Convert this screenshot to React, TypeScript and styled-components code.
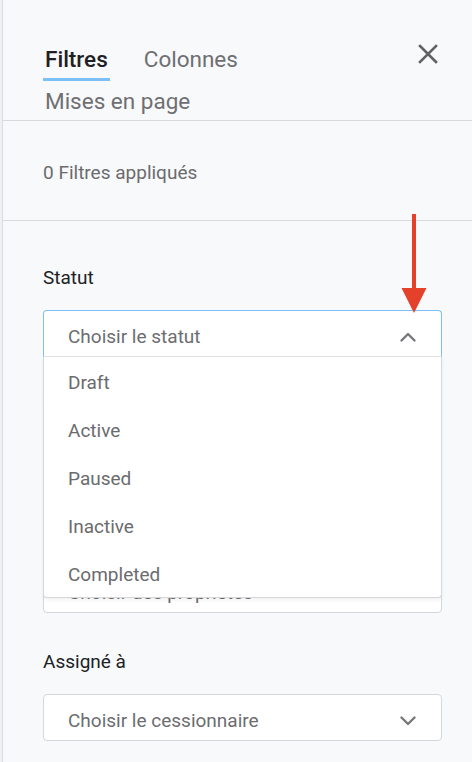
import React from "react";
import styled, { createGlobalStyle, css } from "styled-components";

const GlobalStyle = createGlobalStyle`
  html, body {
    margin: 0;
    padding: 0;
    background: #f8f9fb;
    font-family: Roboto, "Noto Sans", "Liberation Sans", sans-serif;
    -webkit-font-smoothing: antialiased;
  }
  * { box-sizing: border-box; }
`;

const Page = styled.div`
  display: flex;
  min-height: 762px;
  width: 472px;
`;

const Backdrop = styled.div`
  width: 2px;
  flex: none;
  background: #eef0f3;
`;

const Panel = styled.aside`
  position: relative;
  flex: 1;
  min-width: 0;
  background: #f8f9fb;
  border-left: 1px solid #dadcdf;
`;

const Header = styled.header`
  display: flex;
  align-items: flex-start;
  justify-content: space-between;
  padding: 47px 32px 7px 40px;
  border-bottom: 1px solid #d8d9db;
`;

const Tabs = styled.nav`
  flex: 0 0 340px;
  display: flex;
  flex-wrap: wrap;
  column-gap: 32px;
  row-gap: 8px;
  align-items: flex-start;
`;

const Tab = styled.button<{ $active?: boolean }>`
  border: none;
  background: none;
  margin: 0;
  padding: 0 2px;
  font-family: inherit;
  font-size: 22.5px;
  line-height: 24px;
  font-weight: 400;
  color: #6f6f72;
  cursor: pointer;
  white-space: nowrap;
  ${(p) =>
    p.$active &&
    css`
      font-weight: 500;
      color: #1f2023;
      padding-bottom: 7px;
      border-bottom: 3px solid #7cc0f7;
    `}
`;

const CloseButton = styled.button`
  flex: none;
  width: 24px;
  height: 24px;
  margin-top: -5px;
  padding: 0;
  border: none;
  background: none;
  display: flex;
  align-items: center;
  justify-content: center;
  color: #626265;
  cursor: pointer;
`;

const Summary = styled.section`
  padding: 41px 30px 36px 40px;
  border-bottom: 1px solid #d8d9db;
  font-size: 19px;
  line-height: 22px;
  color: #6b6b6e;
`;

const Form = styled.div`
  display: flex;
  flex-direction: column;
  gap: 38px;
  padding: 46px 30px 0 40px;
`;

const Field = styled.div`
  display: flex;
  flex-direction: column;
  gap: 21px;
`;

const Label = styled.label`
  font-size: 19px;
  line-height: 22px;
  color: #202124;
`;

const SelectWrap = styled.div`
  position: relative;
`;

const SelectBox = styled.div<{ $open?: boolean }>`
  height: 47px;
  display: flex;
  align-items: center;
  justify-content: space-between;
  padding: 6px 25px 0 24px;
  background: #fff;
  border: 1px solid #d6d7d9;
  border-radius: 4px;
  font-size: 19px;
  color: #6d6d70;
  ${(p) =>
    p.$open &&
    css`
      border-color: #7cc0f7;
      border-bottom-color: #e2e3e5;
      border-radius: 4px 4px 0 0;
    `}
`;

const Menu = styled.ul`
  position: absolute;
  top: 100%;
  left: 0;
  right: 0;
  margin: 0;
  padding: 0;
  list-style: none;
  background: #fff;
  border: 1px solid #d6d7d9;
  border-top: none;
  border-radius: 0 0 4px 4px;
  box-shadow: 0 2px 4px rgba(0, 0, 0, 0.06);
  z-index: 2;
`;

const MenuItem = styled.li`
  height: 48px;
  display: flex;
  align-items: center;
  padding: 2px 24px 0;
  font-size: 19px;
  color: #6b6b6e;
`;

const Arrow = styled.svg`
  position: absolute;
  left: 398px;
  top: 213px;
  z-index: 3;
`;

const Chevron = ({ up }: { up?: boolean }) => (
  <svg width="16" height="10" viewBox="0 0 16 10" fill="none">
    <path
      d={up ? "M1.5 8.5 L8 2 L14.5 8.5" : "M1.5 1.5 L8 8 L14.5 1.5"}
      stroke="#77787b"
      strokeWidth="2.4"
      strokeLinecap="round"
      strokeLinejoin="round"
    />
  </svg>
);

type FieldDef = {
  label: string;
  placeholder: string;
  open?: boolean;
  options?: string[];
};

const fields: FieldDef[] = [
  {
    label: "Statut",
    placeholder: "Choisir le statut",
    open: true,
    options: ["Draft", "Active", "Paused", "Inactive", "Completed"],
  },
  { label: "Type", placeholder: "Choisir le type" },
  { label: "Propriétés", placeholder: "Choisir des propriétés" },
  { label: "Assigné à", placeholder: "Choisir le cessionnaire" },
];

export default function App() {
  return (
    <>
      <GlobalStyle />
      <Page>
        <Backdrop />
        <Panel>
          <Header>
            <Tabs>
              <Tab $active>Filtres</Tab>
              <Tab>Colonnes</Tab>
              <Tab>Mises en page</Tab>
            </Tabs>
            <CloseButton aria-label="Fermer">
              <svg width="20" height="20" viewBox="0 0 20 20">
                <path
                  d="M2 2 L18 18 M18 2 L2 18"
                  stroke="currentColor"
                  strokeWidth="2.6"
                  strokeLinecap="square"
                />
              </svg>
            </CloseButton>
          </Header>
          <Summary>0 Filtres appliqués</Summary>
          <Form>
            {fields.map((f) => (
              <Field key={f.label}>
                <Label>{f.label}</Label>
                <SelectWrap>
                  <SelectBox $open={f.open}>
                    <span>{f.placeholder}</span>
                    <Chevron up={f.open} />
                  </SelectBox>
                  {f.open && f.options && (
                    <Menu>
                      {f.options.map((o) => (
                        <MenuItem key={o}>{o}</MenuItem>
                      ))}
                    </Menu>
                  )}
                </SelectWrap>
              </Field>
            ))}
          </Form>
          <Arrow width="26" height="101" viewBox="0 0 26 101">
            <rect x="11" y="1" width="4" height="80" fill="#e5402a" />
            <polygon points="0.5,75 25.5,75 13,100" fill="#e5402a" />
          </Arrow>
        </Panel>
      </Page>
    </>
  );
}
